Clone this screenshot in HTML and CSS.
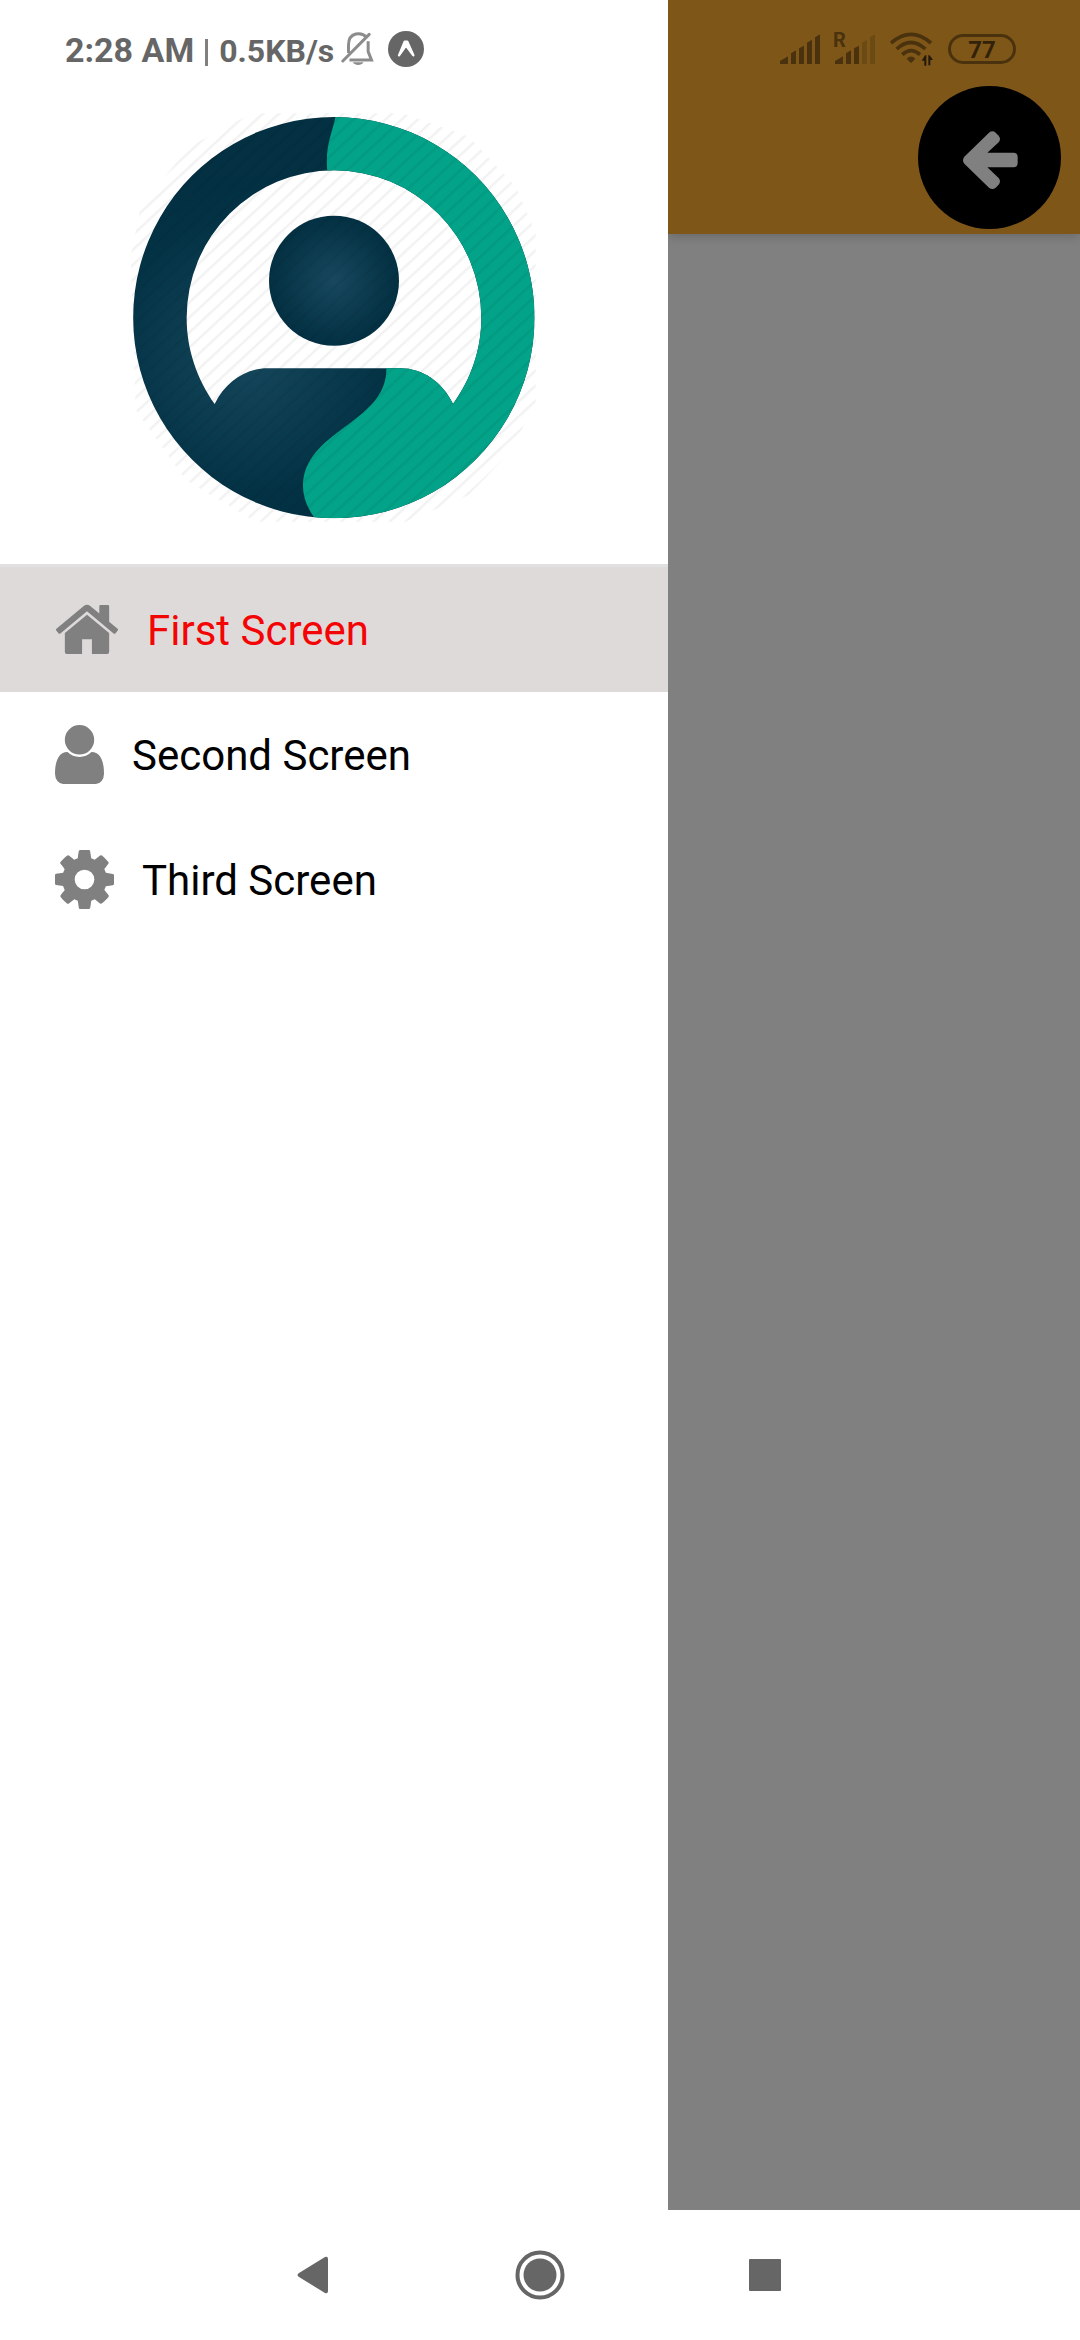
FILE: index.html
```html
<!DOCTYPE html>
<html lang="en">
<head>
<meta charset="utf-8">
<meta name="viewport" content="width=device-width, initial-scale=1">
<title>First Screen</title>
<link rel="stylesheet" href="styles.css">
</head>
<body>
<div class="stage">
  <aside class="drawer">
    <div class="status status-left">
      <span class="clock">2:28 AM</span>
      <span class="divider"></span>
      <span class="speed">0.5KB/s</span>
      <svg class="bell" viewBox="900 68 98 102" aria-hidden="true">
        <g fill="none" stroke="#8c8c8c" stroke-width="9">
          <path d="M922 131V108C922 66 962 68 976 84M981 96V127L991 152H925" />
          <path d="M905 155L984 75" stroke-linecap="round"/>
        </g>
        <path d="M935 159H967C961 170 941 170 935 159Z" fill="#8c8c8c"/>
      </svg>
      <svg class="expo" viewBox="0 0 108 108" aria-hidden="true">
        <circle cx="54" cy="54" r="54" fill="#666"/>
        <path d="M33 73L50 32H58L76 73L54 44Z" fill="#fff" stroke="#fff" stroke-width="7" stroke-linejoin="round"/>
        <path d="M43 76L54 53L66 76Z" fill="#666"/>
      </svg>
    </div>
    <svg class="logo" viewBox="0 0 1350 1380" role="img" aria-label="Profile">
      <defs>
        <radialGradient id="ring" gradientUnits="userSpaceOnUse" cx="420" cy="790" r="560">
          <stop offset="0" stop-color="#16475c"/>
          <stop offset="0.75" stop-color="#033245"/>
          <stop offset="1" stop-color="#033042"/>
        </radialGradient>
        <radialGradient id="head">
          <stop offset="0" stop-color="#17485e"/>
          <stop offset="1" stop-color="#033042"/>
        </radialGradient>
        <pattern id="lines" width="33" height="33" patternUnits="userSpaceOnUse" patternTransform="rotate(-43)">
          <rect width="33" height="7" fill="#000" fill-opacity="0.05"/>
        </pattern>
        <clipPath id="shape">
          <path clip-rule="evenodd" d="M675 81A602 602 0 1 1 674 81ZM317 942C350 875 410 835 475 835H875C940 835 1000 875 1032 942C1085 868 1117 780 1117 683A442 442 0 0 0 233 683C233 780 265 868 317 942Z"/>
        </clipPath>
      </defs>
      <g clip-path="url(#shape)">
        <rect x="60" y="70" width="1230" height="1230" fill="url(#ring)"/>
        <path d="M681 70C672 130 647 160 655 245L700 700L832 835C835 1000 582 1020 582 1190Q582 1235 616 1283V1300H1300V70Z" fill="#02a388"/>
      </g>
      <circle cx="675" cy="572" r="195" fill="url(#head)"/>
      <path d="M430 70H880L1080 140L1220 290L1280 430V940L1200 1090L1080 1215L890 1295H440L230 1170L80 960L65 500L95 350L240 170Z" fill="url(#lines)"/>
    </svg>
    <nav class="menu">
      <a class="item active" href="#first">
        <svg class="icon home" viewBox="0 0 1664 1792" aria-hidden="true"><path d="M1408 992v480q0 26-19 45t-45 19h-384v-384h-256v384h-384q-26 0-45-19t-19-45v-480q0-1 .5-3t.5-3l575-474 575 474q1 2 1 6zm223-69l-62 74q-8 9-21 11h-3q-13 0-21-7l-692-577-692 577q-12 8-24 7-13-2-21-11l-62-74q-8-10-7-23.5t11-21.5l719-599q32-26 76-26t76 26l244 204v-195q0-14 9-23t23-9h192q14 0 23 9t9 23v408l219 182q10 8 11 21.5t-7 23.5z"/></svg>
        <span class="label">First Screen</span>
      </a>
      <a class="item" href="#second">
        <svg class="icon user" viewBox="0 0 1280 1792" aria-hidden="true"><path d="M1280 1399q0 109-62.500 187t-150.500 78h-854q-88 0-150.500-78t-62.500-187q0-85 8.500-160.500t31.500-152 58.500-131 94-89 134.500-34.500q131 128 313 128t313-128q76 0 134.500 34.500t94 89 58.500 131 31.500 152 8.500 160.500zm-256-887q0 159-112.500 271.500t-271.500 112.500-271.500-112.500-112.500-271.500 112.500-271.500 271.500-112.500 271.500 112.500 112.500 271.500z"/></svg>
        <span class="label">Second Screen</span>
      </a>
      <a class="item" href="#third">
        <svg class="icon cog" viewBox="0 0 1536 1792" aria-hidden="true"><path d="M1024 896q0-106-75-181t-181-75-181 75-75 181 75 181 181 75 181-75 75-181zm512-109v222q0 12-8 23t-20 13l-185 28q-19 54-39 91 35 50 107 138 10 12 10 25t-9 23q-27 37-99 108t-94 71q-12 0-26-9l-138-108q-44 23-91 38-16 136-29 186-7 28-36 28h-222q-14 0-24.500-8.500t-11.500-21.500l-28-184q-49-16-90-37l-141 107q-10 9-25 9-14 0-25-11-126-114-165-168-7-10-7-23 0-12 8-23 15-21 51-66.500t54-70.500q-27-50-41-99l-183-27q-13-2-21-12.500t-8-23.500v-222q0-12 8-23t19-13l186-28q14-46 39-92-40-57-107-138-10-12-10-24 0-10 9-23 26-36 98.500-107.500t94.500-71.500q13 0 26 10l138 107q44-23 91-38 16-136 29-186 7-28 36-28h222q14 0 24.500 8.500t11.500 21.500l28 184q49 16 90 37l142-107q9-9 24-9 13 0 25 10 129 119 165 170 7 8 7 22 0 12-8 23-15 21-51 66.500t-54 70.500q26 50 41 98l183 28q13 2 21 12.500t8 23.500z"/></svg>
        <span class="label">Third Screen</span>
      </a>
    </nav>
  </aside>
  <main class="screen">
    <header class="header">
      <div class="status status-right">
        <svg class="signal" viewBox="0 0 120 90" aria-hidden="true">
          <path fill="#4a320e" d="M0 90V81L24 67V90ZM33 90V58L48 49V90ZM57 90V43L72 35V90ZM81 90V26L96 17V90ZM105 90V10L120 1V90Z"/>
        </svg>
        <span class="roaming">
          <svg class="signal" viewBox="0 0 120 90" aria-hidden="true">
            <path fill="#4a320e" d="M0 90V81L24 67V90ZM33 90V58L48 49V90ZM57 90V43L72 35V90Z"/>
            <path fill="#6c4a14" d="M81 90V26L96 17V90ZM105 90V10L120 1V90Z"/>
          </svg>
          <span class="roaming-mark">R</span>
        </span>
        <svg class="wifi" viewBox="450 70 129 102" aria-hidden="true">
          <g fill="none" stroke="#4a320e" stroke-width="11">
            <path d="M453 103Q513 51 573 103"/>
            <path d="M470 121Q513 82 556 121"/>
            <path d="M487 138Q513 114 540 138"/>
          </g>
          <path fill="#4a320e" d="M500 150Q513 137 526 150L516 161Q513 164 510 161Z"/>
          <path fill="#24180a" d="M545 156L555 140H559V171H553V156ZM565 140H569L579 154H571V170H565Z"/>
        </svg>
        <span class="battery">77</span>
      </div>
      <button class="back" type="button" aria-label="Close menu">
        <svg viewBox="114 47 429 429" aria-hidden="true"><path fill="#808080" d="M253 259L327 187Q337 179 347 187L356 196Q364 206 356 216L322 247H400Q413 247 413 260V278Q413 291 400 291H322L356 323Q364 333 356 343L347 352Q337 360 327 352L253 280Q245 270 253 259Z"/></svg>
      </button>
    </header>
  </main>
</div>
<footer class="navbar">
  <button type="button" aria-label="Back"><svg class="nav-back" viewBox="0 0 36 38" aria-hidden="true"><path d="M2 17L28 1Q31 0 31 3V35Q31 38 28 37L2 21Q-1 19 2 17Z"/></svg></button>
  <button type="button" aria-label="Home"><svg class="nav-home" viewBox="0 0 50 50" aria-hidden="true"><circle cx="25" cy="25" r="22.500" fill="none" stroke="#666" stroke-width="4"/><circle cx="25" cy="25" r="16.500"/></svg></button>
  <button type="button" aria-label="Recent apps"><svg class="nav-recent" viewBox="0 0 32 32" aria-hidden="true"><rect width="32" height="32" rx="1"/></svg></button>
</footer>
</body>
</html>
```
FILE: styles.css
```css
* {
  box-sizing: border-box;
}

body {
  margin: 0;
  min-height: 100vh;
  display: flex;
  flex-direction: column;
  background: #fff;
  font-family: Roboto, "Liberation Sans", sans-serif;
}

svg {
  display: block;
  flex: none;
}

button {
  border: 0;
  padding: 0;
  background: none;
}

.stage {
  flex: 1;
  display: grid;
  grid-template-columns: 167fr 103fr;
}

.drawer {
  display: flex;
  flex-direction: column;
  background: #fff;
}

.status {
  display: flex;
  align-items: center;
}

.status-left {
  height: 90px;
  padding: 8px 0 0 65px;
  color: #666;
  font-weight: 700;
  white-space: nowrap;
}

.clock {
  padding-top: 2px;
  font-size: 34px;
}

.divider {
  width: 3px;
  height: 27px;
  margin: 6px 11px 0 11px;
  background: #808080;
}

.speed {
  padding-top: 3px;
  font-size: 32px;
}

.bell {
  width: 33px;
  height: 34px;
  margin: 0 14px 0 7px;
}

.expo {
  width: 36px;
  height: 36px;
}

.logo {
  width: 450px;
  height: 460px;
  align-self: center;
}

.menu {
  margin-top: 14px;
  border-top: 3px solid #e2e1e1;
}

.item {
  display: flex;
  align-items: center;
  gap: 28px;
  height: 125px;
  padding-left: 55px;
  color: #000;
  font-size: 42px;
  line-height: 50px;
  text-decoration: none;
}

.item.active {
  background: #dedada;
  color: #f40505;
}

.label {
  padding-top: 3px;
}

.icon {
  height: 69px;
  fill: #808080;
}

.home {
  width: 64px;
}

.user {
  width: 49px;
}

.cog {
  width: 59px;
}

.screen {
  background: #808080;
}

.header {
  display: flex;
  flex-direction: column;
  align-items: flex-end;
  padding-bottom: 5px;
  background: #7e5718;
  box-shadow: 0 2px 10px rgba(0, 0, 0, 0.2);
  clip-path: inset(0 0 -20px 0);
}

.status-right {
  height: 86px;
  padding: 12px 64px 0 0;
  gap: 15px;
}

.signal {
  width: 40px;
  height: 30px;
}

.roaming {
  position: relative;
}

.roaming-mark {
  position: absolute;
  left: -2px;
  top: -6px;
  color: #4a320e;
  font-size: 20px;
  font-weight: 700;
  line-height: 24px;
}

.wifi {
  width: 43px;
  height: 34px;
}

.battery {
  width: 68px;
  height: 30px;
  border: 3px solid #4a320e;
  border-radius: 15px;
  color: #33220a;
  font-size: 24px;
  font-weight: 700;
  line-height: 26px;
  text-align: center;
}

.back {
  width: 143px;
  height: 143px;
  margin-right: 19px;
  border-radius: 50%;
  background: #000;
}

.navbar {
  display: flex;
  align-items: center;
  justify-content: center;
  height: 130px;
  background: #fff;
}

.navbar button {
  display: flex;
  align-items: center;
  justify-content: center;
  width: 225px;
  height: 130px;
}

.navbar svg {
  fill: #666;
}

.nav-back {
  width: 36px;
  height: 38px;
}

.nav-home {
  width: 50px;
  height: 50px;
}

.nav-recent {
  width: 32px;
  height: 32px;
}
```
